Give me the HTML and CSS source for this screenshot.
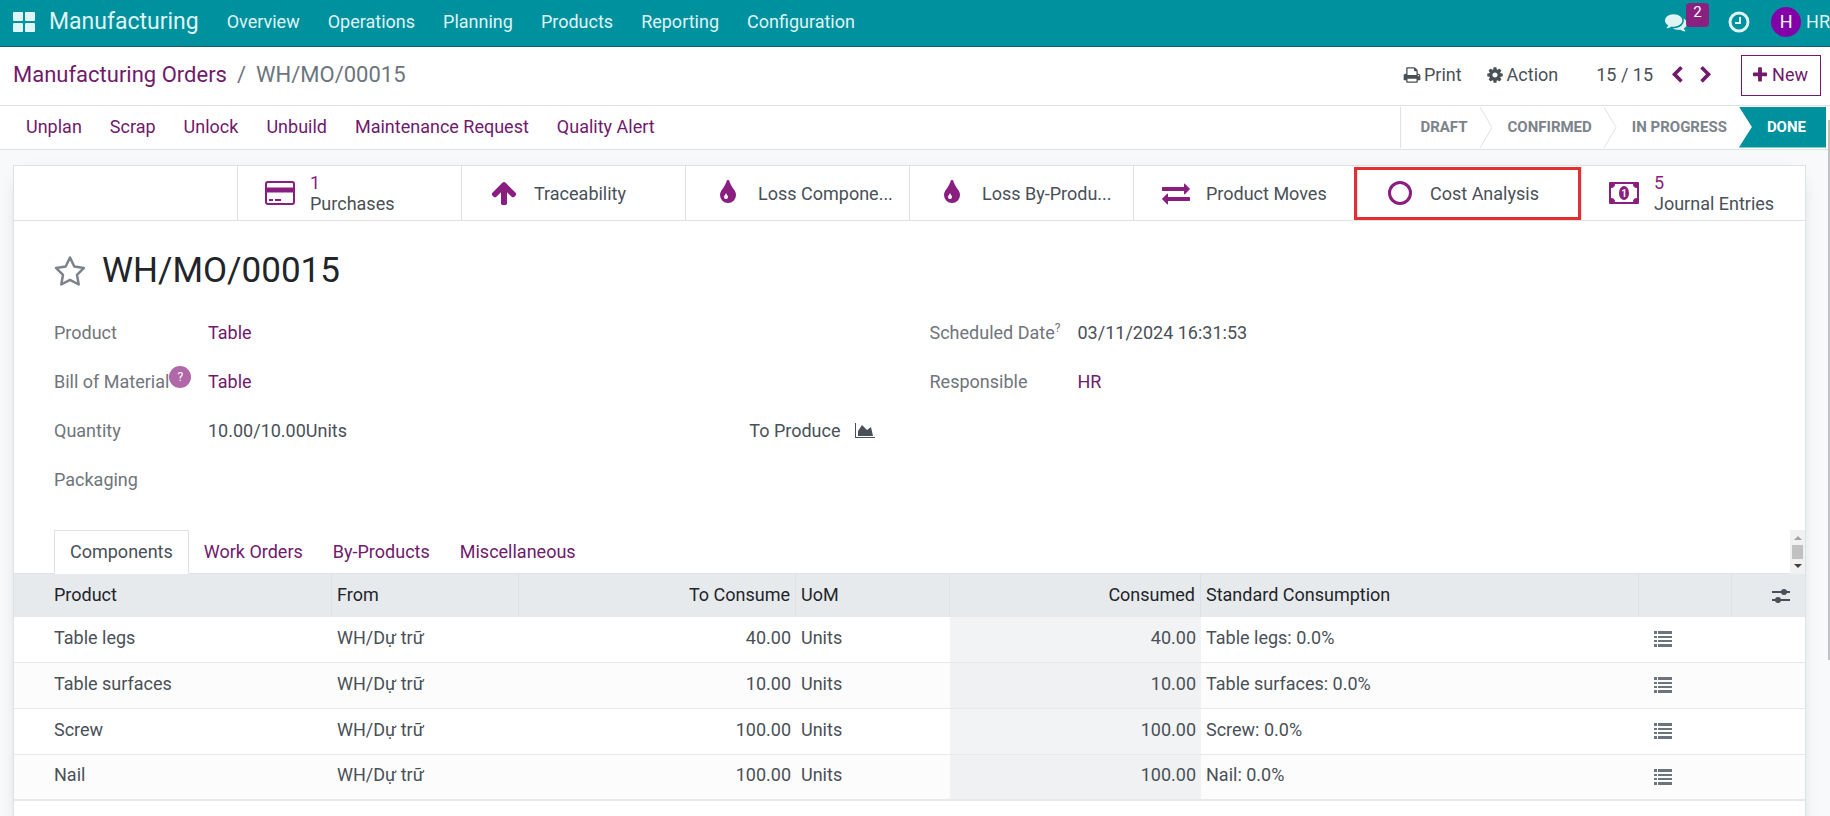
FILE: index.html
```
<!DOCTYPE html>
<html lang="en">
<head>
  <meta charset="UTF-8">
  <title>WH/MO/00015 - Manufacturing</title>
  <meta name="viewport" content="width=device-width, initial-scale=1.0">
  <link rel="stylesheet" href="styles.css">
</head>
<body>
  <svg class="defs" aria-hidden="true">
    <symbol id="i-tint" viewBox="0 0 1792 1792"><path d="M896 1152q0-36-20-69-1-1-15.500-22.500t-25.500-38-25-44-21-50.500q-4-16-21-16t-21 16q-7 23-21 50.500t-25 44-25.500 38-15.500 22.500q-20 33-20 69 0 53 37.500 90.500t90.500 37.500 90.500-37.500 37.500-90.500zm512-128q0 212-150 362t-362 150-362-150-150-362q0-145 81-275 6-9 62.500-90.500t101-151 99.500-178 83-201.500q9-30 34-47t51-17 51.500 17 33.500 47q28 93 83 201.500t99.500 178 101 151 62.500 90.500q81 127 81 275z"/></symbol>
    <symbol id="i-list" viewBox="0 0 18 16"><path d="M0 0h3v3H0zM4 0h14v3H4zM0 5h3v2H0zM4 5h14v2H4zM0 9h3v2H0zM4 9h14v2H4zM0 13h3v3H0zM4 13h14v3H4z"/></symbol>
  </svg>

  <header class="navbar">
    <button class="apps" aria-label="Apps">
      <svg width="22" height="20" viewBox="0 0 22 20"><rect width="10" height="9" rx="1"/><rect x="12" width="10" height="9" rx="1"/><rect y="11" width="10" height="9" rx="1"/><rect x="12" y="11" width="10" height="9" rx="1"/></svg>
    </button>
    <a class="brand" href="#">Manufacturing</a>
    <nav class="menu">
      <a href="#">Overview</a>
      <a href="#">Operations</a>
      <a href="#">Planning</a>
      <a href="#">Products</a>
      <a href="#">Reporting</a>
      <a href="#">Configuration</a>
    </nav>
    <div class="systray">
      <button class="messages" aria-label="Messages">
        <svg width="22" height="22" viewBox="0 0 1792 1792"><path d="M1408 768q0 139-94 257t-256.500 186.500-353.500 68.500q-86 0-176-16-124 88-278 128-36 9-86 16h-3q-11 0-20.500-8t-11.500-21q-1-3-1-6.500t.5-6.500 2-6l2.500-5 3.500-5.500 4-5 4.500-5 4-4.500q5-6 23-25t26-29.500 22.500-29 25-38.500 20.500-44q-124-72-195-177t-71-224q0-139 94-257t256.500-186.500 353.500-68.500 353.500 68.500 256.500 186.500 94 257zm384 256q0 120-71 224.500t-195 176.500q10 24 20.500 44t25 38.500 22.500 29 26 29.500 23 25q1 1 4 4.500t4.500 5 4 5 3.500 5.500l2.500 5 2 6 .5 6.500-1 6.500q-3 14-13 22t-22 7q-50-7-86-16-154-40-278-128-90 16-176 16-271 0-472-132 58 4 88 4 161 0 309-45t264-129q125-92 192-212t67-254q0-77-23-152 129 71 204 178t75 230z"/></svg>
        <span class="badge">2</span>
      </button>
      <button class="activities" aria-label="Activities">
        <svg class="line" width="22" height="22" viewBox="0 0 22 22"><circle cx="11" cy="11" r="9" stroke-width="3"/><path d="M12 6v6H7" stroke-width="2"/></svg>
      </button>
      <button class="user"><span class="avatar">H</span>HR</button>
    </div>
  </header>

  <div class="control-panel">
    <div class="breadcrumb"><a href="#">Manufacturing Orders</a><span class="sep">/</span><span>WH/MO/00015</span></div>
    <div class="tools">
      <button class="tool">
        <svg width="18" height="18" viewBox="0 0 1792 1792"><path d="M448 1536h896v-256h-896v256zm0-640h896v-384h-160q-40 0-68-28t-28-68v-160h-640v640zm1152 64q0-26-19-45t-45-19-45 19-19 45 19 45 45 19 45-19 19-45zm128 0v416q0 13-9.500 22.500t-22.500 9.500h-224v160q0 40-28 68t-68 28h-960q-40 0-68-28t-28-68v-160h-224q-13 0-22.500-9.500t-9.500-22.500v-416q0-79 56.500-135.500t135.500-56.500h64v-544q0-40 28-68t68-28h672q40 0 88 20t76 48l152 152q28 28 48 76t20 88v256h64q79 0 135.500 56.500t56.500 135.500z"/></svg>
        Print
      </button>
      <button class="tool">
        <svg width="18" height="18" viewBox="0 0 1792 1792"><path d="M1152 896q0-106-75-181t-181-75-181 75-75 181 75 181 181 75 181-75 75-181zm512-109v222q0 12-8 23t-20 13l-185 28q-19 54-39 91 35 50 107 138 10 12 10 25t-9 23q-27 37-99 108t-94 71q-12 0-26-9l-138-108q-44 23-91 38-16 136-29 186-7 28-36 28h-222q-14 0-24.500-8.500t-11.500-21.500l-28-184q-49-16-90-37l-141 107q-10 9-25 9-14 0-25-11-126-114-165-168-7-10-7-23 0-12 8-23 15-21 51-66.500t54-70.500q-27-50-41-99l-183-27q-13-2-21-12.500t-8-23.500v-222q0-12 8-23t19-13l186-28q14-46 39-92-40-57-107-138-10-12-10-24 0-10 9-23 26-36 98.500-107.500t94.500-71.500q13 0 26 10l138 107q44-23 91-38 16-136 29-186 7-28 36-28h222q14 0 24.500 8.500t11.500 21.500l28 184q49 16 90 37l142-107q9-9 24-9 13 0 25 10 129 119 165 170 7 8 7 22 0 12-8 23-15 21-51 66.500t-54 70.500q26 50 41 98l183 28q13 2 21 12.500t8 23.500z"/></svg>
        Action
      </button>
    </div>
    <div class="pager">
      <span>15 / 15</span>
      <button aria-label="Previous"><svg width="18" height="18" viewBox="0 0 1792 1792"><path d="M1427 301l-531 531 531 531q19 19 19 45t-19 45l-166 166q-19 19-45 19t-45-19l-742-742q-19-19-19-45t19-45l742-742q19-19 45-19t45 19l166 166q19 19 19 45t-19 45z"/></svg></button>
      <button aria-label="Next"><svg width="18" height="18" viewBox="0 0 1792 1792"><path d="M1363 877l-742 742q-19 19-45 19t-45-19l-166-166q-19-19-19-45t19-45l531-531-531-531q-19-19-19-45t19-45l166-166q19-19 45-19t45 19l742 742q19 19 19 45t-19 45z"/></svg></button>
    </div>
    <button class="new">
      <svg width="18" height="18" viewBox="0 0 1792 1792"><path d="M1600 736v192q0 40-28 68t-68 28h-416v416q0 40-28 68t-68 28h-192q-40 0-68-28t-28-68v-416h-416q-40 0-68-28t-28-68v-192q0-40 28-68t68-28h416v-416q0-40 28-68t68-28h192q40 0 68 28t28 68v416h416q40 0 68 28t28 68z"/></svg>
      New
    </button>
  </div>

  <main class="content">
    <div class="statusbar">
      <div class="actions">
        <button>Unplan</button>
        <button>Scrap</button>
        <button>Unlock</button>
        <button>Unbuild</button>
        <button>Maintenance Request</button>
        <button>Quality Alert</button>
      </div>
      <div class="steps">
        <button>DRAFT</button>
        <svg class="arrow" width="13" height="41" viewBox="0 0 13 41"><path d="M0 0l12 20.500L0 41"/></svg>
        <button>CONFIRMED</button>
        <svg class="arrow" width="13" height="41" viewBox="0 0 13 41"><path d="M0 0l12 20.500L0 41"/></svg>
        <button>IN PROGRESS</button>
        <button class="current">DONE</button>
      </div>
    </div>

    <section class="sheet">
      <div class="stats">
        <div class="stat"></div>
        <button class="stat">
          <span class="icon"><svg class="line" width="30" height="24" viewBox="0 0 30 24"><rect x="1" y="1" width="28" height="22" rx="2" stroke-width="2"/><path d="M1 9h28" stroke-width="5"/><path d="M4 19h4M10 19h6" stroke-width="2"/></svg></span>
          <span class="text"><span class="num">1</span>Purchases</span>
        </button>
        <button class="stat">
          <span class="icon"><svg width="28" height="28" viewBox="0 0 1792 1792"><path d="M1675 971q0 51-37 90l-75 75q-38 38-91 38-54 0-90-38l-294-293v704q0 52-37.500 84.500t-90.500 32.500h-128q-53 0-90.500-32.500t-37.500-84.500v-704l-294 293q-36 38-90 38t-90-38l-75-75q-38-38-38-90 0-53 38-91l651-651q35-37 90-37 54 0 91 37l651 651q37 39 37 91z"/></svg></span>
          <span class="text">Traceability</span>
        </button>
        <button class="stat">
          <span class="icon"><svg width="28" height="28"><use href="#i-tint"/></svg></span>
          <span class="text">Loss Compone...</span>
        </button>
        <button class="stat">
          <span class="icon"><svg width="28" height="28"><use href="#i-tint"/></svg></span>
          <span class="text">Loss By-Produ...</span>
        </button>
        <button class="stat">
          <span class="icon"><svg width="28" height="28" viewBox="0 0 1792 1792"><path d="M1792 1184v192q0 13-9.500 22.500t-22.500 9.500h-1376v192q0 13-9.500 22.500t-22.500 9.500q-12 0-24-10l-319-320q-9-9-9-22 0-14 9-23l320-320q9-9 23-9 13 0 22.500 9.500t9.500 22.500v192h1376q13 0 22.500 9.500t9.500 22.500zm0-544q0 14-9 23l-320 320q-9 9-23 9-13 0-22.500-9.500t-9.500-22.500v-192h-1376q-13 0-22.500-9.500t-9.500-22.500v-192q0-13 9.500-22.500t22.500-9.500h1376v-192q0-14 9-23t23-9q12 0 24 10l319 319q9 9 9 23z"/></svg></span>
          <span class="text">Product Moves</span>
        </button>
        <button class="stat marked">
          <span class="icon"><svg class="line" width="24" height="24" viewBox="0 0 24 24"><circle cx="12" cy="12" r="10.500" stroke-width="3"/></svg></span>
          <span class="text">Cost Analysis</span>
        </button>
        <button class="stat">
          <span class="icon"><svg width="30" height="22" viewBox="0 0 30 22"><path fill-rule="evenodd" d="M1 0h28q1 0 1 1v20q0 1-1 1H1q-1 0-1-1V1q0-1 1-1zM6 2Q6 6 2 6v10q4 0 4 4h18q0-4 4-4V6q-4 0-4-4z"/><ellipse cx="15" cy="11" rx="5" ry="7"/><text x="15" y="15" class="coin">1</text></svg></span>
          <span class="text"><span class="num">5</span>Journal Entries</span>
        </button>
      </div>

      <div class="title">
        <button aria-label="Priority"><svg class="line" width="32" height="32" viewBox="0 0 32 32"><path d="M16 2.500l4.300 9 9.700 1.400-7 6.900 1.700 9.700-8.700-4.600-8.700 4.600L9 19.800l-7-6.900 9.700-1.400z" stroke-width="2.500" stroke-linejoin="round"/></svg></button>
        <h1>WH/MO/00015</h1>
      </div>

      <div class="fields">
        <dl class="group">
          <div class="field"><dt>Product</dt><dd><a href="#">Table</a></dd></div>
          <div class="field"><dt>Bill of Material<span class="help">?</span></dt><dd><a href="#">Table</a></dd></div>
          <div class="field">
            <dt>Quantity</dt>
            <dd>10.00/10.00Units</dd>
            <dd class="forecast">To Produce
              <button aria-label="Forecast"><svg width="20" height="16" viewBox="0 0 20 16"><path d="M0 0h1v14h19v1H0zM3 13V8l4-6 4 4 1 1 4-3 2 9z"/></svg></button>
            </dd>
          </div>
          <div class="field"><dt>Packaging</dt><dd></dd></div>
        </dl>
        <dl class="group right">
          <div class="field"><dt>Scheduled Date<sup>?</sup></dt><dd>03/11/2024 16:31:53</dd></div>
          <div class="field"><dt>Responsible</dt><dd><a href="#">HR</a></dd></div>
        </dl>
      </div>

      <div class="tabs">
        <button class="active">Components</button>
        <button>Work Orders</button>
        <button>By-Products</button>
        <button>Miscellaneous</button>
        <div class="mini-scroll">
          <svg width="8" height="4" viewBox="0 0 8 4"><path d="M0 4l4-4 4 4z" fill="#a3a3a3"/></svg>
          <span></span>
          <svg width="8" height="4" viewBox="0 0 8 4"><path d="M0 0l4 4 4-4z" fill="#404040"/></svg>
        </div>
      </div>

      <table>
        <colgroup>
          <col class="c-product"><col class="c-from"><col class="c-qty"><col class="c-uom"><col class="c-done"><col><col class="c-details"><col class="c-options">
        </colgroup>
        <thead>
          <tr>
            <th>Product</th>
            <th>From</th>
            <th class="number">To Consume</th>
            <th>UoM</th>
            <th class="number">Consumed</th>
            <th>Standard Consumption</th>
            <th></th>
            <th><button aria-label="Columns"><svg width="18" height="16" viewBox="0 0 18 16"><path d="M0 3h18v2H0zM0 11h18v2H0z"/><circle cx="12" cy="4" r="3"/><circle cx="6" cy="12" r="3"/></svg></button></th>
          </tr>
        </thead>
        <tbody>
          <tr>
            <td>Table legs</td><td>WH/Dự trữ</td><td class="number">40.00</td><td>Units</td><td class="number done">40.00</td><td>Table legs: 0.0%</td>
            <td><button aria-label="Details"><svg width="18" height="16"><use href="#i-list"/></svg></button></td><td></td>
          </tr>
          <tr>
            <td>Table surfaces</td><td>WH/Dự trữ</td><td class="number">10.00</td><td>Units</td><td class="number done">10.00</td><td>Table surfaces: 0.0%</td>
            <td><button aria-label="Details"><svg width="18" height="16"><use href="#i-list"/></svg></button></td><td></td>
          </tr>
          <tr>
            <td>Screw</td><td>WH/Dự trữ</td><td class="number">100.00</td><td>Units</td><td class="number done">100.00</td><td>Screw: 0.0%</td>
            <td><button aria-label="Details"><svg width="18" height="16"><use href="#i-list"/></svg></button></td><td></td>
          </tr>
          <tr>
            <td>Nail</td><td>WH/Dự trữ</td><td class="number">100.00</td><td>Units</td><td class="number done">100.00</td><td>Nail: 0.0%</td>
            <td><button aria-label="Details"><svg width="18" height="16"><use href="#i-list"/></svg></button></td><td></td>
          </tr>
        </tbody>
      </table>
    </section>
    <div class="scroll-thumb"></div>
  </main>
</body>
</html>
```
FILE: styles.css
```
* {
  box-sizing: border-box;
}

body {
  margin: 0;
  height: 100vh;
  display: flex;
  flex-direction: column;
  overflow: hidden;
  font-family: Roboto, "Noto Sans", sans-serif;
  font-size: 18px;
  line-height: 24px;
  color: #495057;
  background: #f8f9fa;
}

a {
  color: #71196b;
  text-decoration: none;
}

button {
  border: none;
  padding: 0;
  background: none;
  font: inherit;
  color: inherit;
  cursor: pointer;
  white-space: nowrap;
}

svg {
  display: block;
  flex: none;
  fill: currentColor;
}

svg.line {
  fill: none;
  stroke: currentColor;
}

.defs {
  position: absolute;
  width: 0;
  height: 0;
}

/* Top bar */
.navbar {
  display: flex;
  align-items: center;
  flex: none;
  height: 47px;
  padding: 0 0 3px 13px;
  background: #00919f;
  border-bottom: 1px solid #1b5a63;
  color: #dff4f5;
}

.navbar a {
  color: inherit;
}

.brand {
  margin: 0 28px 0 14px;
  font-size: 23px;
}

.menu {
  display: flex;
  gap: 28px;
}

.systray {
  display: flex;
  align-items: center;
  margin-left: auto;
}

.messages {
  position: relative;
  margin-right: 41px;
}

.badge {
  position: absolute;
  left: 21px;
  top: -8px;
  width: 23px;
  height: 24px;
  border-radius: 4px;
  background: #8a2180;
  color: #fff;
  font-size: 15px;
  line-height: 18px;
}

.activities {
  margin-right: 21px;
}

.user {
  display: flex;
  align-items: center;
  gap: 5px;
}

.avatar {
  width: 30px;
  height: 30px;
  border-radius: 50%;
  background: #8300a8;
  color: #fff;
  line-height: 30px;
}

/* Control panel */
.control-panel {
  display: flex;
  align-items: center;
  flex: none;
  height: 59px;
  padding: 0 9px 2px 13px;
  background: #fff;
  border-bottom: 1px solid #dee2e6;
}

.breadcrumb {
  font-size: 22px;
  color: #6c757d;
}

.sep {
  margin: 0 10px;
}

.tools {
  display: flex;
  gap: 24px;
  margin-left: auto;
}

.tool,
.new {
  display: flex;
  align-items: center;
  gap: 3px;
}

.pager {
  display: flex;
  align-items: center;
  gap: 11px;
  margin: 0 26px 0 38px;
}

.pager span {
  margin-right: 4px;
}

.pager button {
  color: #71196b;
}

.new {
  height: 41px;
  padding: 0 12px 0 9px;
  border: 1px solid #71196b;
  color: #71196b;
}

/* Status bar */
.content {
  position: relative;
  flex: 1;
  min-height: 0;
  overflow: hidden;
}

.statusbar {
  display: flex;
  align-items: center;
  justify-content: space-between;
  height: 44px;
  padding: 0 4px 1px 26px;
  background: #fff;
  border-bottom: 1px solid #dee2e6;
}

.actions {
  display: flex;
  gap: 28px;
  color: #71196b;
}

.steps {
  display: flex;
  height: 41px;
  border-left: 1px solid #dee2e6;
  font-size: 15px;
  font-weight: 700;
  color: #7c838a;
}

.steps button {
  padding: 0 12px 0 15px;
}

.steps button:first-child {
  padding-left: 19px;
}

.steps .current {
  padding: 0 20px 0 28px;
  background: #00919f;
  color: #fff;
  clip-path: polygon(0 0, 100% 0, 100% 100%, 0 100%, 13px 50%);
}

.arrow path {
  fill: none;
  stroke: #dee2e6;
}

/* Form sheet */
.sheet {
  min-height: 700px;
  margin: 15px 24px 0 13px;
  background: #fff;
  border: 1px solid #dee2e6;
  box-shadow: 0 5px 20px -12px rgba(0, 0, 0, 0.4);
}

.stats {
  display: flex;
  height: 55px;
  border-bottom: 1px solid #dee2e6;
}

.stat {
  position: relative;
  display: flex;
  align-items: center;
  flex: 1 1 0;
  min-width: 0;
  padding-left: 12px;
  border-left: 1px solid #dee2e6;
  line-height: 21px;
  text-align: left;
}

.stat:first-child {
  border-left: none;
}

.stat .icon {
  display: flex;
  justify-content: center;
  flex: none;
  width: 60px;
  color: #8a1d80;
}

.num {
  display: block;
  color: #8a1d80;
}

.marked::after {
  content: "";
  position: absolute;
  inset: 1px 0 0 -4px;
  border: 3px solid #e32f2f;
}

.coin {
  fill: #fff;
  font-size: 10px;
  font-weight: 700;
  text-anchor: middle;
}

.title {
  display: flex;
  align-items: center;
  gap: 16px;
  height: 87px;
  padding: 12px 40px 0;
}

.title button {
  color: #7c838a;
}

h1 {
  margin: 0;
  font-size: 35px;
  font-weight: 400;
  line-height: 40px;
  color: #212529;
}

.fields {
  display: grid;
  grid-template-columns: 1fr 1fr;
  padding: 0 40px;
}

.group {
  margin: 0;
}

.group.right {
  padding-left: 20px;
}

.field {
  display: flex;
  align-items: center;
  height: 49px;
}

dt {
  width: 154px;
  color: #70757b;
}

.right dt {
  width: 148px;
}

dd {
  margin: 0;
}

dt sup {
  font-size: 12px;
  line-height: 0;
}

.help {
  display: inline-block;
  width: 22px;
  height: 22px;
  margin-top: -4px;
  border-radius: 50%;
  background: #b168a8;
  color: #fff;
  font-size: 12px;
  line-height: 22px;
  text-align: center;
  vertical-align: top;
}

.forecast {
  display: flex;
  align-items: center;
  gap: 14px;
  margin-left: auto;
  margin-right: 35px;
}

/* Notebook */
.tabs {
  position: relative;
  display: flex;
  height: 44px;
  margin-top: 26px;
  padding-left: 40px;
  border-bottom: 1px solid #dee2e6;
  color: #71196b;
}

.tabs button {
  padding: 0 15px;
}

.tabs .active {
  height: 44px;
  border: 1px solid #dee2e6;
  border-bottom-color: #fff;
  background: #fff;
  color: #495057;
}

.mini-scroll {
  display: flex;
  flex-direction: column;
  align-items: center;
  justify-content: space-between;
  width: 15px;
  height: 44px;
  margin-left: auto;
  padding: 6px 0;
  background: #f1f1f1;
}

.mini-scroll span {
  width: 11px;
  height: 14px;
  background: #c1c1c1;
}

table {
  width: 100%;
  table-layout: fixed;
  border-collapse: separate;
  border-spacing: 0;
}

.c-product { width: 318px; }
.c-from { width: 187px; }
.c-qty { width: 277px; }
.c-uom { width: 154px; }
.c-done { width: 251px; }
.c-details { width: 93px; }
.c-options { width: 73px; }

th,
td {
  padding: 0 5px 2px;
  text-align: left;
  font-weight: 400;
}

th:first-child,
td:first-child {
  padding-left: 40px;
}

th {
  height: 43px;
  background: #e7eaed;
  border-right: 1px solid #dee2e6;
  color: #212529;
}

th:last-child {
  border-right: none;
}

th button {
  display: block;
  margin: 2px 0 0 35px;
  color: #495057;
}

td {
  height: 46px;
  padding-bottom: 4px;
  border-bottom: 1px solid #e6e8ea;
}

td button {
  display: block;
  margin: 3px 0 0 10px;
  color: #6c757d;
}

tbody tr:nth-child(even) {
  background: #fcfcfc;
}

tbody tr:last-child td {
  border-bottom-width: 2px;
}

.number {
  text-align: right;
}

td.done {
  background: rgba(222, 226, 230, 0.4);
}

.scroll-thumb {
  position: absolute;
  top: 14px;
  right: 0;
  width: 2px;
  height: 540px;
  background: #c1c1c1;
}
```
